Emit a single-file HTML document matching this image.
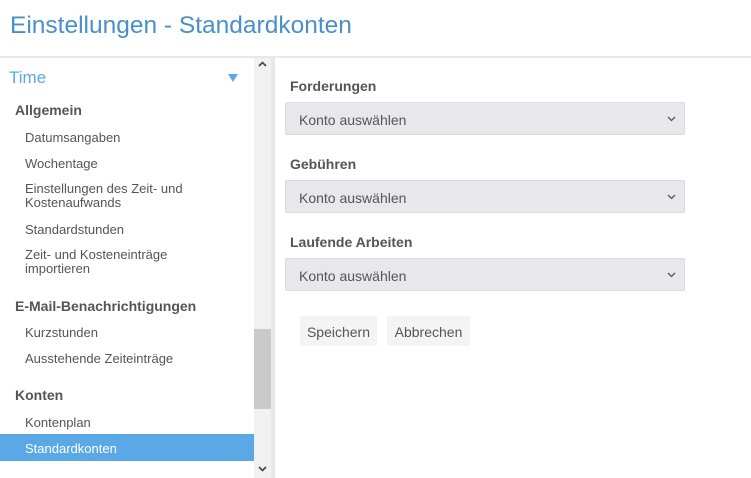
<!DOCTYPE html>
<html><head><meta charset="utf-8"><style>
*{margin:0;padding:0;box-sizing:border-box}
body{width:751px;height:478px;overflow:hidden;background:#fff;font-family:"Liberation Sans",sans-serif;color:#555;position:relative}
.h{position:absolute;left:10px;top:12px;font-size:24.5px;color:#4a90c8;font-weight:normal}
.hl{position:absolute;left:0;top:56px;width:751px;height:2px;background:#e8e8e8}
.t{position:absolute;font-size:13px;color:#555;white-space:nowrap}
.b{font-weight:bold;font-size:14px;color:#555}
.sb{position:absolute;left:254px;top:58px;width:17px;height:420px;background:#f1f1f1}
.th{position:absolute;left:254px;top:329px;width:17px;height:80px;background:#c9c9c9}
.vb{position:absolute;left:271px;top:58px;width:4px;height:420px;background:#e6e8ee}
.lab{position:absolute;left:290px;font-size:14px;font-weight:bold;color:#555}
.sel{position:absolute;left:285px;width:400px;height:33px;background:#e8e8ec;border:1px solid #dcdce0;border-radius:2px;font-size:14px;color:#555;padding:9px 0 0 13px}
.sel svg{position:absolute;right:8px;top:13px}
.btn{position:absolute;top:316px;height:30px;background:#f4f4f4;border-radius:2px;font-size:14px;color:#555;text-align:center;padding-top:8px}
</style></head><body>
<div class="h">Einstellungen - Standardkonten</div>
<div class="hl"></div>
<div class="t" style="left:9px;top:68px;font-size:17px;color:#5aa9e6">Time</div>
<svg style="position:absolute;left:228px;top:74px" width="10" height="8"><path d="M0 0H10L5 8Z" fill="#5aa9e6"/></svg>
<div class="t b" style="left:15px;top:102px">Allgemein</div>
<div class="t" style="left:25px;top:130px">Datumsangaben</div>
<div class="t" style="left:25px;top:156px">Wochentage</div>
<div class="t" style="left:25px;top:182px;line-height:14px">Einstellungen des Zeit- und<br>Kostenaufwands</div>
<div class="t" style="left:25px;top:222px">Standardstunden</div>
<div class="t" style="left:25px;top:248px;line-height:14px">Zeit- und Kosteneinträge<br>importieren</div>
<div class="t b" style="left:15px;top:298px">E-Mail-Benachrichtigungen</div>
<div class="t" style="left:25px;top:325px">Kurzstunden</div>
<div class="t" style="left:25px;top:351px">Ausstehende Zeiteinträge</div>
<div class="t b" style="left:15px;top:387px">Konten</div>
<div class="t" style="left:25px;top:415px">Kontenplan</div>
<div style="position:absolute;left:0;top:434px;width:254px;height:27px;background:#5aa9e6"></div>
<div class="t" style="left:25px;top:441px;color:#fff">Standardkonten</div>
<div class="sb"></div><div class="th"></div>
<svg style="position:absolute;left:258px;top:61px" width="9" height="6"><path d="M1 5L4.5 1.5L8 5" stroke="#444" stroke-width="1.6" fill="none"/></svg>
<svg style="position:absolute;left:258px;top:466px" width="9" height="6"><path d="M1 1L4.5 4.5L8 1" stroke="#444" stroke-width="1.6" fill="none"/></svg>
<div class="vb"></div>
<div class="lab" style="top:78px">Forderungen</div>
<div class="sel" style="top:102px">Konto auswählen<svg width="9" height="6"><path d="M1 1L4.5 4.5L8 1" stroke="#555" stroke-width="1.3" fill="none"/></svg></div>
<div class="lab" style="top:156px">Gebühren</div>
<div class="sel" style="top:180px">Konto auswählen<svg width="9" height="6"><path d="M1 1L4.5 4.5L8 1" stroke="#555" stroke-width="1.3" fill="none"/></svg></div>
<div class="lab" style="top:234px">Laufende Arbeiten</div>
<div class="sel" style="top:258px">Konto auswählen<svg width="9" height="6"><path d="M1 1L4.5 4.5L8 1" stroke="#555" stroke-width="1.3" fill="none"/></svg></div>
<div class="btn" style="left:300px;width:77px">Speichern</div>
<div class="btn" style="left:387px;width:83px">Abbrechen</div>
</body></html>
